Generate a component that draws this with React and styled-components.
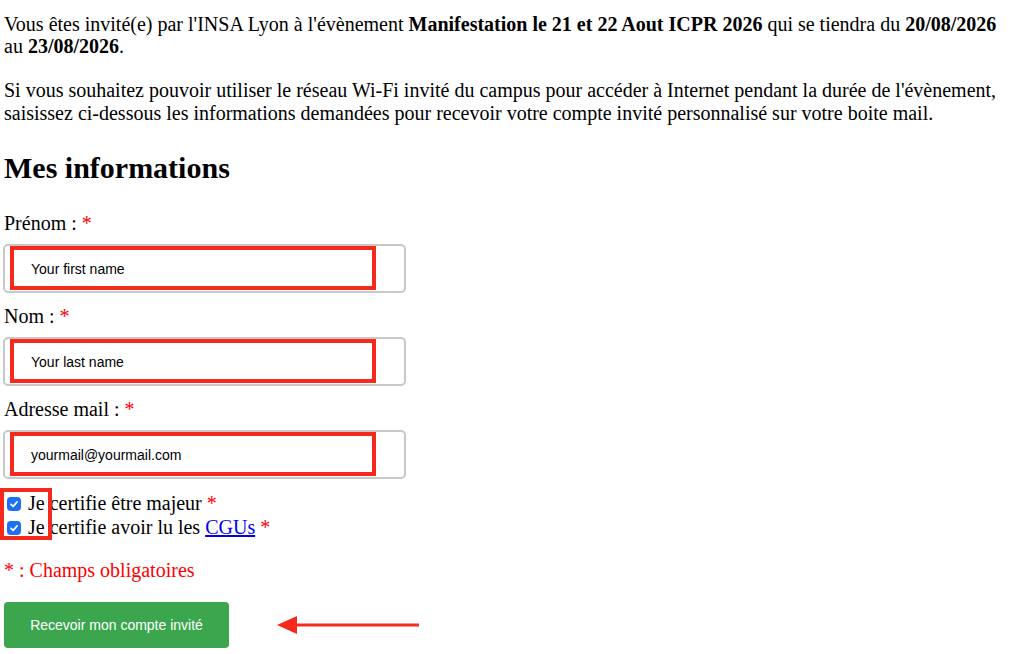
import React from "react";
import styled, { createGlobalStyle } from "styled-components";

const Global = createGlobalStyle`
  html, body { margin: 0; padding: 0; background: #fff; }
  body { font-family: "Liberation Serif", "Times New Roman", serif; color: #000; }
`;

const Page = styled.div`
  padding: 13px 4px 0 4px;
  font-size: 20px;
  line-height: 22px;
`;

const Para = styled.p`
  margin: 0 0 22px 0;
  line-height: ${(p) => p.$lh || 22}px;
`;

const Heading = styled.h2`
  margin: 25px 0 26px 0;
  font-size: 30px;
  line-height: 36px;
  font-weight: bold;
`;

const Form = styled.form`
  display: flex;
  flex-direction: column;
`;

const Field = styled.div`
  display: flex;
  flex-direction: column;
  gap: 10px;
  margin-bottom: 12px;
`;

const Label = styled.label`
  display: block;
`;

const Star = styled.span`
  color: #ff0000;
`;

const InputWrap = styled.div`
  position: relative;
  width: 403px;
  margin-left: -1px;
`;

const Input = styled.input`
  box-sizing: border-box;
  width: 100%;
  height: 49px;
  border: 2px solid #c8c8c8;
  border-radius: 5px;
  padding: 0 0 0 26px;
  font-family: "Liberation Sans", Arial, sans-serif;
  font-size: 14px;
  color: #000;
  background: #fff;
  outline: none;
  &::placeholder { color: #000; }
`;

const Highlight = styled.div`
  position: absolute;
  left: ${(p) => p.$left}px;
  top: ${(p) => p.$top}px;
  width: ${(p) => p.$w}px;
  height: ${(p) => p.$h}px;
  box-sizing: border-box;
  border: 4px solid #f5291c;
  pointer-events: none;
`;

const Checks = styled.div`
  position: relative;
  display: flex;
  flex-direction: column;
  margin-top: 0px;
`;

const CheckRow = styled.label`
  display: flex;
  align-items: center;
  height: 24px;
  gap: 7px;
  padding-left: 3px;
`;

const Box = styled.span`
  width: 14px;
  height: 14px;
  border-radius: 4px;
  background: #1f6ff2;
  display: inline-flex;
  align-items: center;
  justify-content: center;
  flex: none;
  margin-top: 2px;
`;

const Link = styled.a`
  color: #0000ee;
  text-decoration: underline;
`;

const Required = styled.p`
  margin: 20px 0 21px 0;
  color: #ff0000;
`;

const Actions = styled.div`
  display: flex;
  align-items: center;
  gap: 48px;
`;

const Button = styled.button`
  width: 225px;
  height: 46px;
  border: none;
  border-radius: 4px;
  background: #3ca64f;
  color: #fff;
  font-family: "Liberation Sans", Arial, sans-serif;
  font-size: 14px;
  cursor: pointer;
`;

const Arrow = () => (
  <svg width="144" height="20" viewBox="0 0 144 20">
    <line x1="14" y1="10" x2="142" y2="10" stroke="#f5291c" strokeWidth="3" />
    <polygon points="0,10 20,1 20,19" fill="#f5291c" />
  </svg>
);

const Check = () => (
  <svg width="10" height="10" viewBox="0 0 10 10">
    <path d="M2 5.3 L4.2 7.4 L8.2 2.8" fill="none" stroke="#fff" strokeWidth="1.7" strokeLinecap="round" strokeLinejoin="round" />
  </svg>
);

const fields = [
  { label: "Prénom :", placeholder: "Your first name", type: "text" },
  { label: "Nom :", placeholder: "Your last name", type: "text" },
  { label: "Adresse mail :", placeholder: "yourmail@yourmail.com", type: "email" },
];

export default function App() {
  return (
    <>
      <Global />
      <Page>
        <Para>
          Vous êtes invité(e) par l'INSA Lyon à l'évènement{" "}
          <b>Manifestation le 21 et 22 Aout ICPR 2026</b> qui se tiendra du{" "}
          <b>20/08/2026</b> au <b>23/08/2026</b>.
        </Para>
        <Para $lh={23}>
          Si vous souhaitez pouvoir utiliser le réseau Wi-Fi invité du campus pour
          accéder à Internet pendant la durée de l'évènement, saisissez ci-dessous les
          informations demandées pour recevoir votre compte invité personnalisé sur
          votre boite mail.
        </Para>
        <Heading>Mes informations</Heading>
        <Form onSubmit={(e) => e.preventDefault()}>
          {fields.map((f) => (
            <Field key={f.label}>
              <Label>
                {f.label} <Star>*</Star>
              </Label>
              <InputWrap>
                <Input type={f.type} placeholder={f.placeholder} />
                <Highlight $left={7} $top={2} $w={366} $h={44} />
              </InputWrap>
            </Field>
          ))}
          <Checks>
            <CheckRow>
              <Box><Check /></Box>
              <span>Je certifie être majeur <Star>*</Star></span>
            </CheckRow>
            <CheckRow>
              <Box><Check /></Box>
              <span>
                Je certifie avoir lu les <Link href="#">CGUs</Link> <Star>*</Star>
              </span>
            </CheckRow>
            <Highlight $left={-4} $top={-3} $w={52} $h={52} />
          </Checks>
          <Required>* : Champs obligatoires</Required>
          <Actions>
            <Button type="submit">Recevoir mon compte invité</Button>
            <Arrow />
          </Actions>
        </Form>
      </Page>
    </>
  );
}
